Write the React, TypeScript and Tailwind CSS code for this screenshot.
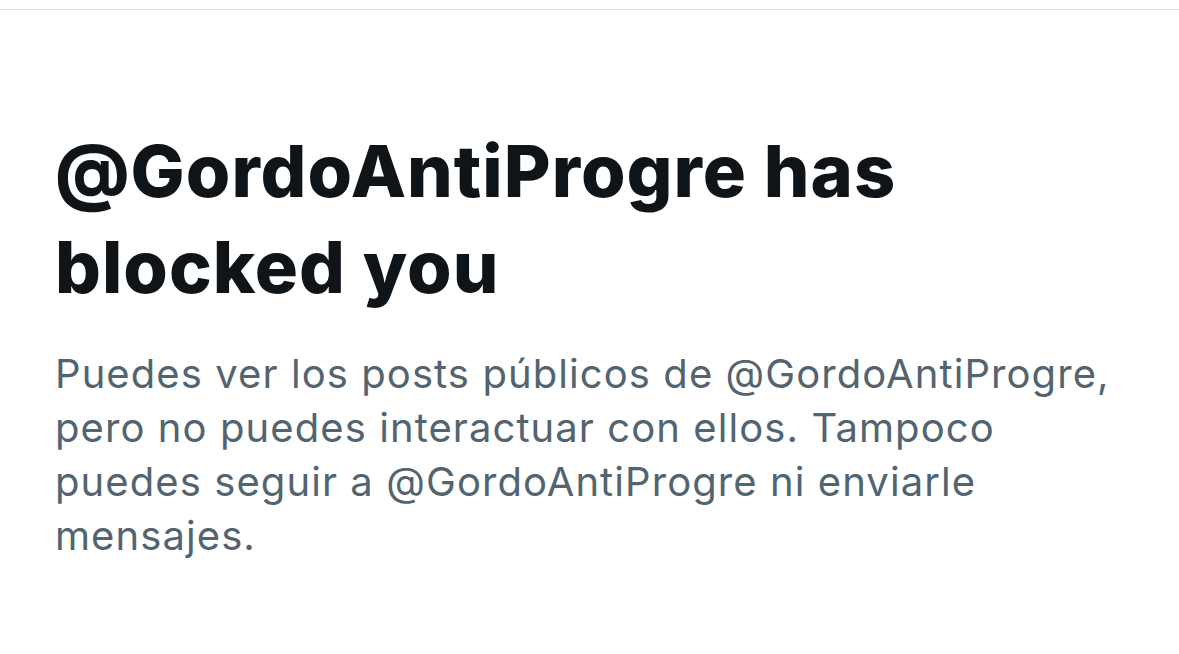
export default function App() {
  return (
    <div className="min-h-[654px] w-full bg-white pt-[9px]">
      <div
        className="border-t border-[#dcdcdc] px-[55px] pt-[113px]"
        style={{ fontFamily: 'Inter, "Liberation Sans", sans-serif' }}
      >
        <h1 className="text-[72px] font-extrabold leading-[96px] tracking-[0.014em] text-[#0f1419]">
          @GordoAntiProgre has
          <br />
          blocked you
        </h1>
        <p className="mt-[32px] text-[40px] leading-[54px] tracking-[0.027em] text-[#536471]">
          Puedes ver los posts públicos de @GordoAntiProgre,
          <br />
          pero no puedes interactuar con ellos. Tampoco
          <br />
          puedes seguir a @GordoAntiProgre ni enviarle
          <br />
          mensajes.
        </p>
      </div>
    </div>
  );
}
